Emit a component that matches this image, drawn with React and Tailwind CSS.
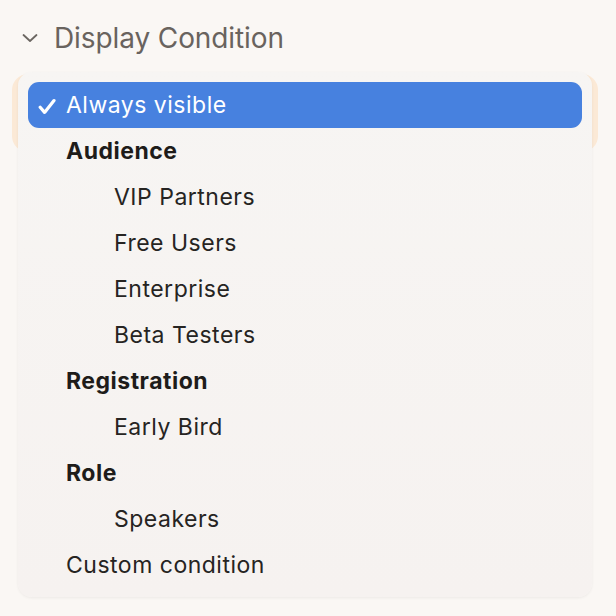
// Menu rows: kind "group" is a bold heading, "child" is indented under it
const options = [
  { label: 'Always visible', kind: 'top', selected: true },
  { label: 'Audience', kind: 'group' },
  { label: 'VIP Partners', kind: 'child' },
  { label: 'Free Users', kind: 'child' },
  { label: 'Enterprise', kind: 'child' },
  { label: 'Beta Testers', kind: 'child' },
  { label: 'Registration', kind: 'group' },
  { label: 'Early Bird', kind: 'child' },
  { label: 'Role', kind: 'group' },
  { label: 'Speakers', kind: 'child' },
  { label: 'Custom condition', kind: 'top' },
]

function Chevron() {
  return (
    <svg width="16" height="10" viewBox="0 0 16 10" fill="none" className="shrink-0">
      <path d="M1.5 2 L8 8 L14.5 2" stroke="#6b6661" strokeWidth="1.8" strokeLinecap="round" strokeLinejoin="round" />
    </svg>
  )
}

function CheckMark() {
  return (
    <svg width="20" height="20" viewBox="0 0 20 20" fill="none" className="shrink-0">
      <path d="M2.2 11.2 L6.6 16.4 L16 4.6" stroke="white" strokeWidth="3.2" strokeLinecap="round" strokeLinejoin="round" />
    </svg>
  )
}

function MenuRow({ option }) {
  if (option.selected) {
    return (
      <div className="h-[46px] pt-[1px] flex items-center rounded-[11px] bg-[#4781df] text-white pl-[10px]">
        <span className="w-[28px] flex items-center"><CheckMark /></span>
        <span>{option.label}</span>
      </div>
    )
  }
  const indent = option.kind === 'child' ? 'pl-[86px]' : 'pl-[38px]'
  const weight = option.kind === 'group' ? 'font-bold text-[#1e1c1a]' : 'text-[#262422]'
  return (
    <div className={`h-[46px] pt-[1px] flex items-center ${indent} ${weight}`}>
      {option.label}
    </div>
  )
}

export default function App() {
  return (
    <div
      className="w-[616px] h-[616px] bg-[#faf7f4] overflow-hidden"
      style={{ fontFamily: 'Inter, "Noto Sans", sans-serif' }}
    >
      {/* Section header */}
      <div className="flex items-center h-[40px] mt-[18px] pl-[22px] gap-[16px] text-[#69635e]">
        <Chevron />
        <span className="text-[28px] tracking-[-0.1px]">Display Condition</span>
      </div>

      {/* Select with its open menu laid over it */}
      <div className="relative ml-[12px] mr-[18px] mt-[16px]">
        <div className="h-[78px] rounded-[16px] bg-[#fbe9d6]" />
        <div className="absolute left-[6px] right-[6px] top-[-2px] rounded-[14px] bg-gradient-to-b from-[#f7f5f3] to-[#f6f2f0] shadow-[0_1px_3px_rgba(0,0,0,0.06)] pt-[10px] pb-[9px] px-[10px] text-[23px] tracking-[0.5px]">
          {options.map((option) => (
            <MenuRow key={option.label} option={option} />
          ))}
        </div>
      </div>
    </div>
  )
}
